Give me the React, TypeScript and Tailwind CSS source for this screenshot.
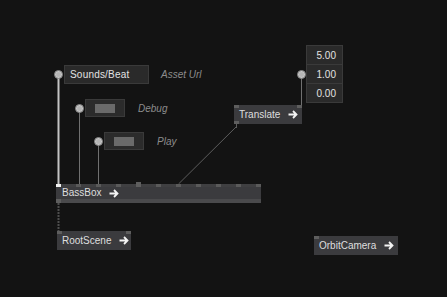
import React from "react";

const font = { fontFamily: '"Liberation Sans", Arial, sans-serif' };

function Arrow() {
  return (
    <svg width="10" height="9" viewBox="0 0 10 9" className="shrink-0 block">
      <path d="M0.5 4.5 H8.5 M5 1 L8.5 4.5 L5 8" stroke="#f4f4f4" strokeWidth="1.8" fill="none" strokeLinecap="butt" strokeLinejoin="miter" />
    </svg>
  );
}

function Dot() {
  return (
    <div
      className="shrink-0 w-[9px] h-[9px] rounded-full bg-[#b4b4b4] border border-[#808080]"
      style={{ boxShadow: "inset 0 0 2px #ececec" }}
    />
  );
}

function Tabs({ bottom = true, right = true }: { bottom?: boolean; right?: boolean }) {
  return (
    <>
      <div className="absolute left-0 top-0 w-[5px] h-[3px] bg-[#5e5e5e]" />
      {right && <div className="absolute right-0 top-0 w-[5px] h-[3px] bg-[#5e5e5e]" />}
      {bottom && <div className="absolute left-0 bottom-0 w-[5px] h-[3px] bg-[#5e5e5e]" />}
    </>
  );
}

function Node({ label, x, y, w, bottom = true, right = true }: { label: string; x: number; y: number; w: number; bottom?: boolean; right?: boolean }) {
  return (
    <div
      className="absolute h-[19px] bg-[#3b3b3e] flex items-center gap-[8px] pl-[5px] text-[10px] text-[#dedede] leading-none whitespace-nowrap"
      style={{ left: x, top: y, width: w, ...font }}
    >
      <Tabs bottom={bottom} right={right} />
      <span>{label}</span>
      <Arrow />
    </div>
  );
}

function Toggle() {
  return (
    <div className="w-[40px] h-[18px] bg-[#2b2b2b] border border-[#3a3a3a] flex items-center justify-center">
      <div className="w-[20px] h-[9px] bg-[#6a6a6a]" />
    </div>
  );
}

export default function App() {
  const ticks = Array.from({ length: 11 }, (_, i) => i);
  return (
    <div className="relative w-[447px] h-[297px] bg-[#131313] overflow-hidden text-[10px]" style={font}>
      <svg className="absolute left-0 top-0" width="447" height="297">
        <line x1="58.5" y1="74" x2="58.5" y2="184" stroke="#c4c4c4" strokeWidth="2" />
        <line x1="79.5" y1="108" x2="79.5" y2="184" stroke="#707070" strokeWidth="1" />
        <line x1="98.5" y1="142" x2="98.5" y2="184" stroke="#707070" strokeWidth="1" />
        <line x1="301.5" y1="74" x2="301.5" y2="105" stroke="#707070" strokeWidth="1" />
        <line x1="237" y1="126" x2="178.5" y2="184" stroke="#5c5c5c" strokeWidth="1" />
        <line x1="236.5" y1="123" x2="236.5" y2="128" stroke="#5c5c5c" strokeWidth="1" />
        <line x1="58.5" y1="203" x2="58.5" y2="231" stroke="#4e4e4e" strokeWidth="2" strokeDasharray="2 1" />
      </svg>

      {/* Sounds/Beat row */}
      <div className="absolute left-[54px] top-[65px] flex items-center">
        <Dot />
        <div className="ml-[1px] w-[85px] h-[19px] bg-[#2a2a2a] border border-[#3a3a3a] flex items-center pl-[5px] text-[#e2e2e2] tracking-[0.2px]">
          Sounds/Beat
        </div>
        <div className="ml-[12px] italic text-[#8c8c8c]">Asset Url</div>
      </div>

      {/* Debug row */}
      <div className="absolute left-[75px] top-[99px] flex items-center">
        <Dot />
        <div className="ml-[1px]"><Toggle /></div>
        <div className="ml-[13px] italic text-[#8c8c8c]">Debug</div>
      </div>

      {/* Play row */}
      <div className="absolute left-[94px] top-[132px] flex items-center">
        <Dot />
        <div className="ml-[1px]"><Toggle /></div>
        <div className="ml-[13px] italic text-[#8c8c8c]">Play</div>
      </div>

      {/* Vector values */}
      <div className="absolute left-[297px] top-[45px] flex items-center">
        <Dot />
        <div className="w-[37px] flex flex-col bg-[#2a2a2a] border border-[#3a3a3a] text-[#e2e2e2]">
          <div className="h-[19px] flex items-center justify-end pr-[6px] border-b border-[#3a3a3a]">5.00</div>
          <div className="h-[19px] flex items-center justify-end pr-[6px] border-b border-[#3a3a3a]">1.00</div>
          <div className="h-[18px] flex items-center justify-end pr-[6px]">0.00</div>
        </div>
      </div>

      {/* Translate */}
      <Node label="Translate" x={234} y={105} w={68} />

      {/* BassBox */}
      <div className="absolute left-[56px] top-[184px] w-[205px] h-[19px] flex flex-col">
        <div className="h-[3px] bg-[#3f3f41] flex justify-between items-end">
          {ticks.map((i) => (
            <div
              key={i}
              className={
                i === 0
                  ? "w-[5px] h-[3px] bg-[#f0f0f0]"
                  : i === 4
                  ? "w-[5px] h-[5px] bg-[#5e5e5e]"
                  : "w-[5px] h-[3px] bg-[#5a5a5a]"
              }
            />
          ))}
        </div>
        <div className="h-[12px] bg-[#3b3b3e] flex items-center gap-[8px] pl-[6px] text-[#dedede] leading-none">
          <span>BassBox</span>
          <Arrow />
        </div>
        <div className="h-[4px] bg-[#4a4a4c] flex">
          <div className="w-[5px] h-[4px] bg-[#5e5e5e]" />
        </div>
      </div>

      {/* RootScene */}
      <Node label="RootScene" x={57} y={231} w={74} bottom={false} />

      {/* OrbitCamera */}
      <Node label="OrbitCamera" x={314} y={236} w={84} bottom={false} right={false} />
    </div>
  );
}
